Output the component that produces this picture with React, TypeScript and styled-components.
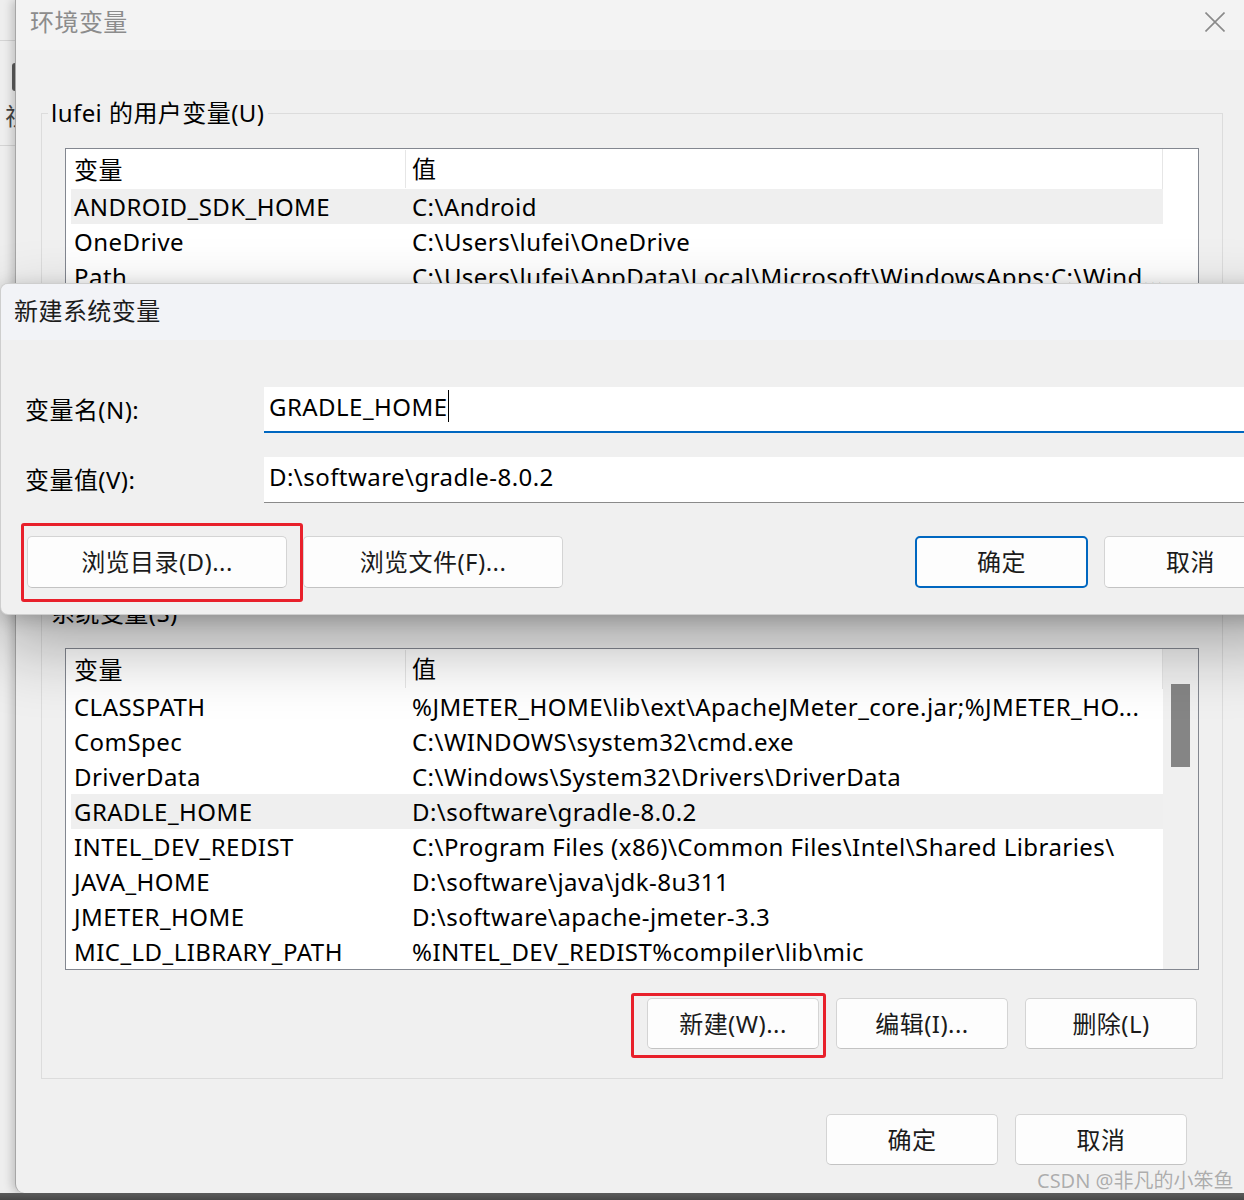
import React from "react";
import styled, { createGlobalStyle, css } from "styled-components";

const GlobalStyle = createGlobalStyle`
  html, body {
    margin: 0;
    padding: 0;
  }
  body {
    background: #4d4d4d;
    font-family: "Noto Sans", "Noto Sans CJK SC", sans-serif;
  }
`;

const Screen = styled.div`
  position: relative;
  width: 1244px;
  height: 1200px;
  overflow: hidden;
  display: flex;
  flex-direction: column;
  background: #ececec;
  font-family: "Noto Sans", "Noto Sans CJK SC", sans-serif;
  font-size: 24px;
  letter-spacing: 0.45px;
  color: #000;
`;

const Desktop = styled.div`
  display: flex;
  height: 1193px;
  flex: none;
`;

const Taskbar = styled.div`
  flex: 1;
  background: linear-gradient(#5b5b5b, #474747);
`;

/* the window behind, only a sliver shows on the left */
const BackStrip = styled.div`
  width: 15px;
  flex: none;
  overflow: hidden;
  display: flex;
  flex-direction: column;
  background: #eeeeee;
`;

const StripRule = styled.div<{ $top: number }>`
  margin-top: ${(p) => p.$top}px;
  height: 1px;
  background: #d4d4d4;
`;

const StripTab = styled.div`
  margin: 22px 0 0 12px;
  width: 10px;
  height: 28px;
  border-radius: 3px;
  background: #5c5c5c;
`;

const StripGlyph = styled.div`
  margin-top: 10px;
  padding-left: 5px;
  white-space: nowrap;
  font-size: 24px;
  line-height: 30px;
  color: #444;
`;

const Window = styled.div`
  flex: none;
  width: 1233px;
  display: flex;
  flex-direction: column;
  background: #f0f0f0;
  border-left: 1px solid #a6a6a6;
  border-bottom-left-radius: 9px;
  box-shadow: -3px 0 10px rgba(0, 0, 0, 0.2);
`;

const TitleBar = styled.div`
  height: 50px;
  flex: none;
  box-sizing: border-box;
  display: flex;
  align-items: center;
  justify-content: space-between;
  padding: 0 24px 6px 14px;
  background: #f3f3f3;
`;

const WindowTitle = styled.div`
  padding-bottom: 4px;
  font-size: 24px;
  color: #8c8c8c;
`;

const WindowBody = styled.div`
  flex: 1;
  display: flex;
  flex-direction: column;
  padding: 48px 26px 28px 25px;
`;

const Group = styled.fieldset<{ $gap?: number }>`
  margin: ${(p) => p.$gap ?? 0}px 0 0;
  padding: 20px 23px 29px;
  border: 1px solid #dcdcdc;
  min-width: 0;
`;

const GroupLegend = styled.legend`
  margin-left: -17px;
  padding: 0 3px;
  font-size: 24px;
  line-height: 30px;
  color: #000;
`;

const List = styled.div`
  height: 320px;
  display: flex;
  overflow: hidden;
  background: #fff;
  border: 1px solid #838790;
`;

const ListBody = styled.div`
  flex: 1;
  min-width: 0;
  padding-left: 5px;
`;

const HeaderRow = styled.div`
  display: flex;
  height: 40px;
  align-items: center;
  border-right: 1px solid #e6e6e6;
`;

const Row = styled.div<{ $selected?: boolean }>`
  display: flex;
  height: 35px;
  align-items: center;
  background: ${(p) => (p.$selected ? "#efefef" : "transparent")};
`;

const NameCell = styled.div`
  width: 334px;
  flex: none;
  box-sizing: border-box;
  padding-left: 3px;
  white-space: nowrap;
  overflow: hidden;
  line-height: 35px;
`;

const ValueCell = styled.div<{ $header?: boolean }>`
  flex: 1;
  min-width: 0;
  box-sizing: border-box;
  padding-left: 7px;
  white-space: nowrap;
  overflow: hidden;
  line-height: 35px;
  ${(p) =>
    p.$header &&
    css`
      padding-left: 6px;
      border-left: 1px solid #e6e6e6;
      height: 38px;
      line-height: 38px;
    `}
`;

const ScrollTrack = styled.div<{ $active?: boolean }>`
  width: 35px;
  flex: none;
  background: ${(p) => (p.$active ? "#f0f0f0" : "#fff")};
`;

const ScrollThumb = styled.div`
  margin: 35px 0 0 8px;
  width: 19px;
  height: 83px;
  background: #858585;
`;

const ButtonRow = styled.div<{ $top: number; $right: number }>`
  display: flex;
  justify-content: flex-end;
  gap: 17px;
  margin-top: ${(p) => p.$top}px;
  padding-right: ${(p) => p.$right}px;
`;

const Button = styled.button<{ $width: number; $height?: number; $primary?: boolean }>`
  width: ${(p) => p.$width}px;
  height: ${(p) => p.$height ?? 51}px;
  flex: none;
  box-sizing: border-box;
  margin: 0;
  padding: 0 0 3px;
  display: flex;
  align-items: center;
  justify-content: center;
  background: #fdfdfd;
  border: 1px solid #d4d4d4;
  border-bottom-color: #c3c3c3;
  border-radius: 5px;
  font-family: inherit;
  font-size: 24px;
  letter-spacing: inherit;
  color: #1b1b1b;
  ${(p) =>
    p.$primary &&
    css`
      border: 2px solid #0067c0;
    `}
`;

const Annotated = styled.span`
  position: relative;
  display: flex;
  flex: none;
`;

/* red annotation frame drawn over a button */
const RedMark = styled.span<{ $t: number; $r: number; $b: number; $l: number }>`
  position: absolute;
  top: ${(p) => p.$t}px;
  right: ${(p) => p.$r}px;
  bottom: ${(p) => p.$b}px;
  left: ${(p) => p.$l}px;
  border: 3px solid #e8202b;
  border-radius: 3px;
  pointer-events: none;
`;

/* the "new system variable" dialog lying on top */
const NewVarDialog = styled.div`
  position: absolute;
  top: 283px;
  left: 0;
  width: 1302px;
  height: 332px;
  box-sizing: border-box;
  display: flex;
  flex-direction: column;
  background: #f0f0f0;
  border: 1px solid rgba(0, 0, 0, 0.14);
  border-radius: 8px;
  overflow: hidden;
  box-shadow: 0 30px 70px rgba(0, 0, 0, 0.32), 0 4px 18px rgba(0, 0, 0, 0.18);
`;

const DialogTitle = styled.div`
  height: 56px;
  flex: none;
  box-sizing: border-box;
  display: flex;
  align-items: center;
  padding: 0 0 6px 13px;
  background: #f2f3f7;
  font-size: 24px;
  color: #1c1c1c;
`;

const DialogBody = styled.div`
  flex: 1;
  display: flex;
  flex-direction: column;
  padding: 47px 24px 0 24px;
`;

const FieldRow = styled.div<{ $top?: number }>`
  display: flex;
  align-items: center;
  margin-top: ${(p) => p.$top ?? 0}px;
`;

const FieldLabel = styled.div`
  width: 239px;
  flex: none;
  font-size: 24px;
  padding-bottom: 4px;
`;

const Field = styled.div<{ $focused?: boolean }>`
  flex: 1;
  height: 46px;
  box-sizing: border-box;
  display: flex;
  align-items: center;
  padding: 0 0 6px 5px;
  background: #fff;
  border-bottom: ${(p) => (p.$focused ? "2px solid #0067c0" : "1px solid #8a8a8a")};
  font-size: 24px;
  white-space: nowrap;
`;

const Caret = styled.span`
  width: 1px;
  height: 32px;
  margin-left: 1px;
  background: #000;
`;

const DialogButtons = styled.div`
  display: flex;
  gap: 16px;
  margin-top: 33px;
  padding-left: 2px;
`;

const Spacer = styled.div`
  flex: 1;
`;

const Watermark = styled.div`
  position: absolute;
  left: 1037px;
  top: 1166px;
  font-size: 20px;
  line-height: 30px;
  letter-spacing: 0;
  white-space: nowrap;
  color: #adadad;
  text-shadow: 0 0 1px #ffffff;
`;

type EnvVar = { name: string; value: string; selected?: boolean };

const userVars: EnvVar[] = [
  { name: "ANDROID_SDK_HOME", value: "C:\\Android", selected: true },
  { name: "OneDrive", value: "C:\\Users\\lufei\\OneDrive" },
  { name: "Path", value: "C:\\Users\\lufei\\AppData\\Local\\Microsoft\\WindowsApps;C:\\Wind..." },
  { name: "TEMP", value: "C:\\Users\\lufei\\AppData\\Local\\Temp" },
  { name: "TMP", value: "C:\\Users\\lufei\\AppData\\Local\\Temp" },
];

const systemVars: EnvVar[] = [
  { name: "CLASSPATH", value: "%JMETER_HOME\\lib\\ext\\ApacheJMeter_core.jar;%JMETER_HO..." },
  { name: "ComSpec", value: "C:\\WINDOWS\\system32\\cmd.exe" },
  { name: "DriverData", value: "C:\\Windows\\System32\\Drivers\\DriverData" },
  { name: "GRADLE_HOME", value: "D:\\software\\gradle-8.0.2", selected: true },
  { name: "INTEL_DEV_REDIST", value: "C:\\Program Files (x86)\\Common Files\\Intel\\Shared Libraries\\" },
  { name: "JAVA_HOME", value: "D:\\software\\java\\jdk-8u311" },
  { name: "JMETER_HOME", value: "D:\\software\\apache-jmeter-3.3" },
  { name: "MIC_LD_LIBRARY_PATH", value: "%INTEL_DEV_REDIST%compiler\\lib\\mic" },
  { name: "NUMBER_OF_PROCESSORS", value: "16" },
];

const CloseIcon = () => (
  <svg width="20" height="20" viewBox="0 0 20 20">
    <path d="M0.5 0.5 L19.5 19.5 M19.5 0.5 L0.5 19.5" stroke="#8a8a8a" strokeWidth="1.6" fill="none" />
  </svg>
);

const VarList = ({ vars, scrollable }: { vars: EnvVar[]; scrollable?: boolean }) => (
  <List>
    <ListBody>
      <HeaderRow>
        <NameCell>变量</NameCell>
        <ValueCell $header>值</ValueCell>
      </HeaderRow>
      {vars.map((v) => (
        <Row key={v.name} $selected={v.selected}>
          <NameCell>{v.name}</NameCell>
          <ValueCell>{v.value}</ValueCell>
        </Row>
      ))}
    </ListBody>
    <ScrollTrack $active={scrollable}>{scrollable && <ScrollThumb />}</ScrollTrack>
  </List>
);

export default function App() {
  return (
    <>
      <GlobalStyle />
      <Screen>
        <Desktop>
          <BackStrip>
            <StripRule $top={40} />
            <StripTab />
            <StripGlyph>视</StripGlyph>
            <StripRule $top={14} />
          </BackStrip>

          <Window>
            <TitleBar>
              <WindowTitle>环境变量</WindowTitle>
              <CloseIcon />
            </TitleBar>
            <WindowBody>
              <Group>
                <GroupLegend>lufei 的用户变量(U)</GroupLegend>
                <VarList vars={userVars} />
                <ButtonRow $top={28} $right={2}>
                  <Button $width={172}>新建(N)...</Button>
                  <Button $width={172}>编辑(E)...</Button>
                  <Button $width={172}>删除(D)</Button>
                </ButtonRow>
              </Group>

              <Group $gap={19}>
                <GroupLegend>系统变量(S)</GroupLegend>
                <VarList vars={systemVars} scrollable />
                <ButtonRow $top={28} $right={2}>
                  <Annotated>
                    <Button $width={172}>新建(W)...</Button>
                    <RedMark $t={-5} $r={-7} $b={-9} $l={-16} />
                  </Annotated>
                  <Button $width={172}>编辑(I)...</Button>
                  <Button $width={172}>删除(L)</Button>
                </ButtonRow>
              </Group>

              <ButtonRow $top={35} $right={36}>
                <Button $width={172}>确定</Button>
                <Button $width={172}>取消</Button>
              </ButtonRow>
            </WindowBody>
          </Window>
        </Desktop>
        <Taskbar />

        <NewVarDialog>
          <DialogTitle>新建系统变量</DialogTitle>
          <DialogBody>
            <FieldRow>
              <FieldLabel>变量名(N):</FieldLabel>
              <Field $focused>
                GRADLE_HOME
                <Caret />
              </Field>
            </FieldRow>
            <FieldRow $top={24}>
              <FieldLabel>变量值(V):</FieldLabel>
              <Field>D:\software\gradle-8.0.2</Field>
            </FieldRow>
            <DialogButtons>
              <Annotated>
                <Button $width={260} $height={52}>浏览目录(D)...</Button>
                <RedMark $t={-13} $r={-16} $b={-14} $l={-6} />
              </Annotated>
              <Button $width={260} $height={52}>浏览文件(F)...</Button>
              <Spacer />
              <Button $width={173} $height={52} $primary>确定</Button>
              <Button $width={173} $height={52}>取消</Button>
            </DialogButtons>
          </DialogBody>
        </NewVarDialog>

        <Watermark>CSDN @非凡的小笨鱼</Watermark>
      </Screen>
    </>
  );
}
